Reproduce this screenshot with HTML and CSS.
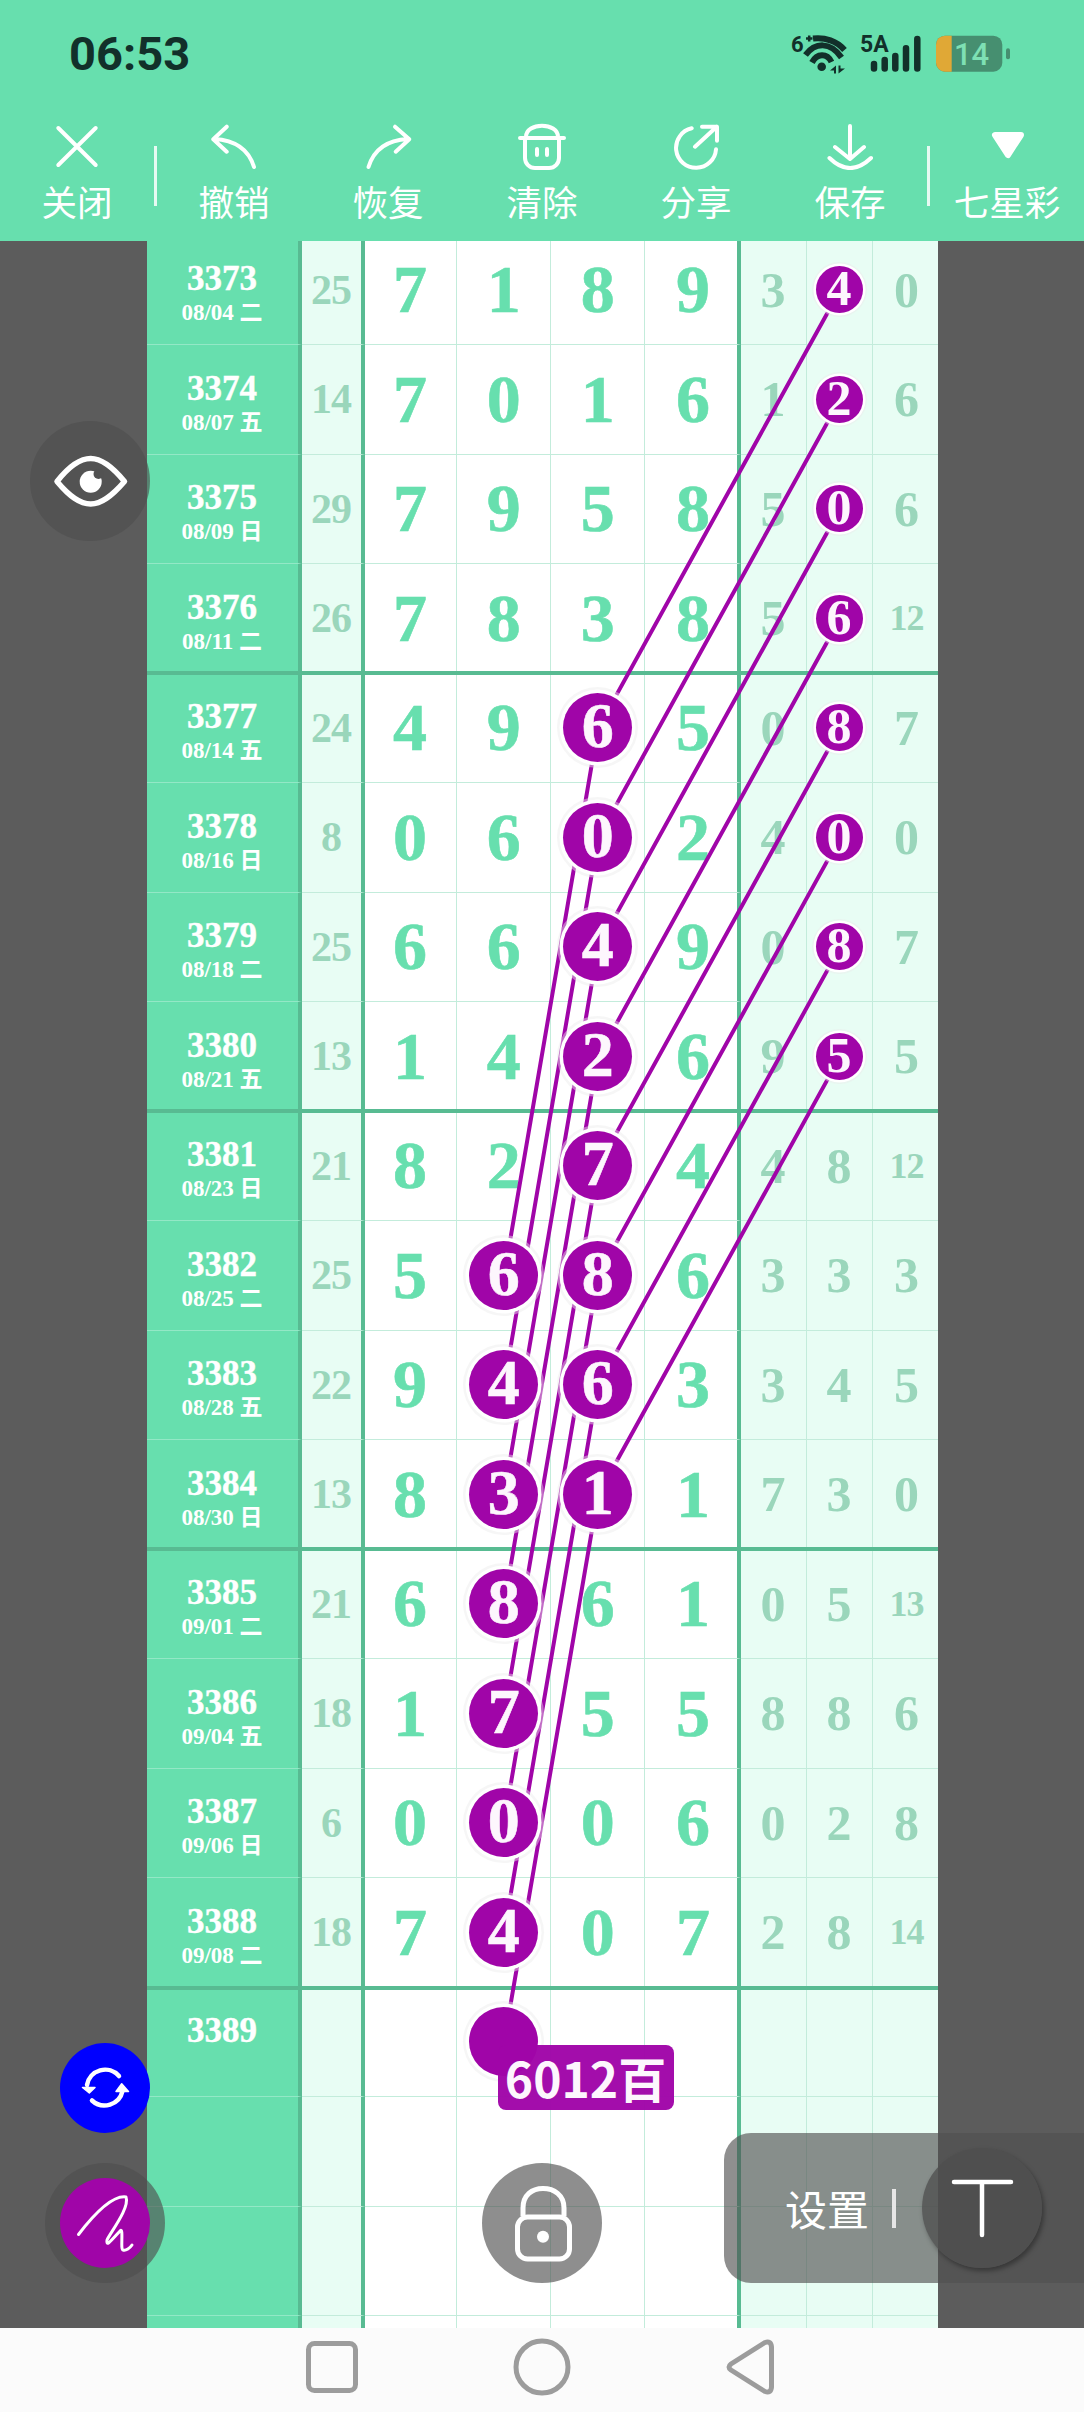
FILE: index.html
```html
<!DOCTYPE html>
<html lang="zh-CN">
<head>
    <meta charset="UTF-8">
    <meta name="viewport" content="width=device-width, initial-scale=1.0">
    <title>七星彩</title>
    <link rel="stylesheet" href="styles.css">
</head>
<body>
<div class="page">

    <header class="top">
        <div class="status">
            <span class="time">06:53</span>
            <svg class="status-icons" width="240" height="70" viewBox="0 0 240 70">
                <text class="st-small" x="11" y="32">6</text>
                <path class="st-plus" d="M26 18.500H32.500M29.200 15.500V21.500"/>
                <path class="st-wifi" d="M33 18.500C45 17 57 21 64.500 30M25.500 35C35 22.500 50 21 61.500 37.500M32 42.500C37 33 47 33 51.500 42"/>
                <circle class="st-fill" cx="41.700" cy="46.700" r="4.300"/>
                <path class="st-fill" d="M50 50.500L56 45.500V53.500H54V50.500ZM58.500 45.500H60.500V48.500H65L58.500 53.500Z"/>
                <text class="st-label" x="80" y="32">5A</text>
                <path class="st-bars" d="M94 44V48.400M104.700 40V48.400M115.300 36V48.400M126 28.300V48.400M137.300 19V48.400"/>
                <rect class="st-batt" x="156" y="15.700" width="66.300" height="36" rx="9"/>
                <path class="st-charge" d="M171.700 15.700H165a9 9 0 0 0-9 9V42.700a9 9 0 0 0 9 9H171.700Z"/>
                <rect class="st-batt" x="226" y="28.300" width="4" height="11" rx="2"/>
                <text class="st-level" x="174" y="45">14</text>
            </svg>
        </div>
        <nav class="tools">
            <div class="tool">
                <svg viewBox="0 0 60 48"><path d="M11.300 6L48.700 43M48.700 6L11.300 43"/></svg>
                <span>关闭</span>
            </div>
            <i class="tool-sep"></i>
            <div class="tool">
                <svg viewBox="0 0 60 48"><path d="M22.700 4.700L9.300 17.300L22.700 29.700M10 17C28 18 44 25 50 45"/></svg>
                <span>撤销</span>
            </div>
            <div class="tool">
                <svg viewBox="0 0 60 48"><path d="M37 4.700L51.300 17.300L37.700 29.700M10.500 45C16 27 30 18 50 17"/></svg>
                <span>恢复</span>
            </div>
            <div class="tool">
                <svg viewBox="0 0 60 48"><path d="M8 16H52M14 15C14 0 46 0 46 15M13 16V36a10 10 0 0 0 10 10H37a10 10 0 0 0 10-10V16M25 27V33M35 27V33"/></svg>
                <span>清除</span>
            </div>
            <div class="tool">
                <svg viewBox="0 0 60 48"><path d="M25.700 6.300A20 20 0 1 0 50 27.300M29 24.700L50.700 4.700M36 4.700H51V18.700"/></svg>
                <span>分享</span>
            </div>
            <div class="tool">
                <svg viewBox="0 0 60 48"><path d="M30 4V37M15 25L30 37L44 25M9.500 36Q30 56 51 36"/></svg>
                <span>保存</span>
            </div>
            <i class="tool-sep"></i>
            <div class="tool tool-last">
                <svg viewBox="0 0 60 48"><path class="solid" d="M18 13H44L31 33Z"/></svg>
                <span>七星彩</span>
            </div>
        </nav>
    </header>

    <main class="content">
        <div class="gutter"></div>
        <div class="board">
            <div class="rows">
                <div class="row"><div class="num"><b>3373</b><small>08/04 二</small></div><div class="sum">25</div><div class="mid">7</div><div class="mid">1</div><div class="mid">8</div><div class="mid">9</div><div class="side">3</div><div class="side"><span class="ball small">4</span></div><div class="side">0</div></div>
                <div class="row"><div class="num"><b>3374</b><small>08/07 五</small></div><div class="sum">14</div><div class="mid">7</div><div class="mid">0</div><div class="mid">1</div><div class="mid">6</div><div class="side">1</div><div class="side"><span class="ball small">2</span></div><div class="side">6</div></div>
                <div class="row"><div class="num"><b>3375</b><small>08/09 日</small></div><div class="sum">29</div><div class="mid">7</div><div class="mid">9</div><div class="mid">5</div><div class="mid">8</div><div class="side">5</div><div class="side"><span class="ball small">0</span></div><div class="side">6</div></div>
                <div class="row"><div class="num"><b>3376</b><small>08/11 二</small></div><div class="sum">26</div><div class="mid">7</div><div class="mid">8</div><div class="mid">3</div><div class="mid">8</div><div class="side">5</div><div class="side"><span class="ball small">6</span></div><div class="side wide">12</div></div>

                <div class="row"><div class="num"><b>3377</b><small>08/14 五</small></div><div class="sum">24</div><div class="mid">4</div><div class="mid">9</div><div class="mid"><span class="ball">6</span></div><div class="mid">5</div><div class="side">0</div><div class="side"><span class="ball small">8</span></div><div class="side">7</div></div>
                <div class="row"><div class="num"><b>3378</b><small>08/16 日</small></div><div class="sum">8</div><div class="mid">0</div><div class="mid">6</div><div class="mid"><span class="ball">0</span></div><div class="mid">2</div><div class="side">4</div><div class="side"><span class="ball small">0</span></div><div class="side">0</div></div>
                <div class="row"><div class="num"><b>3379</b><small>08/18 二</small></div><div class="sum">25</div><div class="mid">6</div><div class="mid">6</div><div class="mid"><span class="ball">4</span></div><div class="mid">9</div><div class="side">0</div><div class="side"><span class="ball small">8</span></div><div class="side">7</div></div>
                <div class="row"><div class="num"><b>3380</b><small>08/21 五</small></div><div class="sum">13</div><div class="mid">1</div><div class="mid">4</div><div class="mid"><span class="ball">2</span></div><div class="mid">6</div><div class="side">9</div><div class="side"><span class="ball small">5</span></div><div class="side">5</div></div>

                <div class="row"><div class="num"><b>3381</b><small>08/23 日</small></div><div class="sum">21</div><div class="mid">8</div><div class="mid">2</div><div class="mid"><span class="ball">7</span></div><div class="mid">4</div><div class="side">4</div><div class="side">8</div><div class="side wide">12</div></div>
                <div class="row"><div class="num"><b>3382</b><small>08/25 二</small></div><div class="sum">25</div><div class="mid">5</div><div class="mid"><span class="ball">6</span></div><div class="mid"><span class="ball">8</span></div><div class="mid">6</div><div class="side">3</div><div class="side">3</div><div class="side">3</div></div>
                <div class="row"><div class="num"><b>3383</b><small>08/28 五</small></div><div class="sum">22</div><div class="mid">9</div><div class="mid"><span class="ball">4</span></div><div class="mid"><span class="ball">6</span></div><div class="mid">3</div><div class="side">3</div><div class="side">4</div><div class="side">5</div></div>
                <div class="row"><div class="num"><b>3384</b><small>08/30 日</small></div><div class="sum">13</div><div class="mid">8</div><div class="mid"><span class="ball">3</span></div><div class="mid"><span class="ball">1</span></div><div class="mid">1</div><div class="side">7</div><div class="side">3</div><div class="side">0</div></div>

                <div class="row"><div class="num"><b>3385</b><small>09/01 二</small></div><div class="sum">21</div><div class="mid">6</div><div class="mid"><span class="ball">8</span></div><div class="mid">6</div><div class="mid">1</div><div class="side">0</div><div class="side">5</div><div class="side wide">13</div></div>
                <div class="row"><div class="num"><b>3386</b><small>09/04 五</small></div><div class="sum">18</div><div class="mid">1</div><div class="mid"><span class="ball">7</span></div><div class="mid">5</div><div class="mid">5</div><div class="side">8</div><div class="side">8</div><div class="side">6</div></div>
                <div class="row"><div class="num"><b>3387</b><small>09/06 日</small></div><div class="sum">6</div><div class="mid">0</div><div class="mid"><span class="ball">0</span></div><div class="mid">0</div><div class="mid">6</div><div class="side">0</div><div class="side">2</div><div class="side">8</div></div>
                <div class="row"><div class="num"><b>3388</b><small>09/08 二</small></div><div class="sum">18</div><div class="mid">7</div><div class="mid"><span class="ball">4</span></div><div class="mid">0</div><div class="mid">7</div><div class="side">2</div><div class="side">8</div><div class="side wide">14</div></div>

                <div class="row"><div class="num"><b>3389</b></div><div class="sum"></div><div class="mid"></div><div class="mid"><span class="ball"></span></div><div class="mid"></div><div class="mid"></div><div class="side"></div><div class="side"></div><div class="side"></div></div>
                <div class="row"><div class="num"></div><div class="sum"></div><div class="mid"></div><div class="mid"></div><div class="mid"></div><div class="mid"></div><div class="side"></div><div class="side"></div><div class="side"></div></div>
                <div class="row"><div class="num"></div><div class="sum"></div><div class="mid"></div><div class="mid"></div><div class="mid"></div><div class="mid"></div><div class="side"></div><div class="side"></div><div class="side"></div></div>
                <div class="row"><div class="num"></div><div class="sum"></div><div class="mid"></div><div class="mid"></div><div class="mid"></div><div class="mid"></div><div class="side"></div><div class="side"></div><div class="side"></div></div>
            </div>

            <svg class="links" width="791" height="2087" viewBox="0 0 791 2087">
                <line class="band" x1="0" x2="791" y1="432" y2="432"/>
                <line class="band" x1="0" x2="791" y1="870" y2="870"/>
                <line class="band" x1="0" x2="791" y1="1308" y2="1308"/>
                <line class="band" x1="0" x2="791" y1="1747" y2="1747"/>
                <polyline points="693,49.2 451,487.3 357,1035"/>
                <polyline points="693,158.7 451,596.9 357,1144.5"/>
                <polyline points="693,268.3 451,706.4 357,1254"/>
                <polyline points="693,377.8 451,815.9 357,1363.6"/>
                <polyline points="693,487.3 451,925.4 357,1473.1"/>
                <polyline points="693,596.9 451,1035 357,1582.6"/>
                <polyline points="693,706.4 451,1144.5 357,1692.2"/>
                <polyline points="693,815.9 451,1254 357,1801.7"/>
            </svg>
            <div class="tag">6012百</div>
        </div>
        <div class="gutter"></div>
    </main>

    <footer class="navbar">
        <svg width="52" height="52" viewBox="0 0 52 52"><rect x="2.500" y="2.500" width="47" height="47" rx="6"/></svg>
        <svg width="58" height="58" viewBox="0 0 58 58"><circle cx="29" cy="29" r="26"/></svg>
        <svg width="48" height="58" viewBox="0 0 48 58"><path d="M39 4.500Q45 2.500 45.500 9V49Q45 55.500 39 53.500L5 32Q1 29 5 26Z"/></svg>
    </footer>

    <div class="float eye">
        <svg width="120" height="120" viewBox="0 0 120 120">
            <path class="eye-line" d="M27 60.500C40 44 50 37.500 60.700 37.500C71 37.500 81 44 94.500 60.500C81 76 71 83 60.700 83C50 83 40 76 27 60.500Z"/>
            <circle class="eye-dot" cx="60.700" cy="60.700" r="11"/>
            <circle class="eye-bite" cx="68.500" cy="53" r="5"/>
        </svg>
    </div>

    <div class="btn-round refresh">
        <svg width="90" height="90" viewBox="0 0 90 90">
            <path class="ic-line" d="M59 33A18.400 18.400 0 0 0 27 42M32 57.500A18.400 18.400 0 0 0 62.500 48"/>
            <path class="ic-head" d="M29.300 50L22.500 44.500H35ZM61.700 40.700L56 48.500H68.500Z"/>
        </svg>
    </div>

    <div class="float pen">
        <div class="btn-round pen-inner">
            <svg width="90" height="90" viewBox="0 0 90 90">
                <path class="ic-thin" d="M18.500 56.500C32 39 52 17 66 19C70 30 50 55 47 62C46 69 50 64 60 53C64 48 60 72 63 72C66 73 70 70 72 67"/>
            </svg>
        </div>
    </div>

    <div class="float lock">
        <svg width="120" height="120" viewBox="0 0 120 120">
            <path class="ic-lock" d="M41 53V45C41 32 50 25.500 61 25.500C72 25.500 82 32 82 45V53"/>
            <rect class="ic-lock" x="35.500" y="54" width="52" height="42" rx="10"/>
            <circle class="eye-dot" cx="61" cy="73.700" r="6"/>
        </svg>
    </div>

    <div class="settings">
        <span class="settings-text">设置</span>
        <i class="settings-sep"></i>
        <div class="font-btn">
            <svg width="120" height="120" viewBox="0 0 120 120"><path class="ic-line" d="M32 34H89M60 34V87"/></svg>
        </div>
    </div>

</div>
</body>
</html>
```
FILE: styles.css
```css
* {
    box-sizing: border-box;
}
html, body {
    margin: 0;
    padding: 0;
}
body {
    font-family: "Noto Sans CJK SC", "Noto Sans", sans-serif;
}
.page {
    position: relative;
    width: 1084px;
    height: 2412px;
    overflow: hidden;
    display: flex;
    flex-direction: column;
    background-color: #5c5c5c;
}

/* header */
.top {
    flex: none;
    height: 241px;
    background-color: #67dfae;
}
.status {
    height: 110px;
    padding: 20px 64px 0 69px;
    display: flex;
    justify-content: space-between;
}
.time {
    font-family: Roboto, sans-serif;
    font-weight: 700;
    font-size: 47px;
    line-height: 68px;
    color: #12302a;
}
.st-small, .st-label {
    font-family: Roboto, sans-serif;
    font-weight: 700;
    fill: #12302a;
}
.st-small {
    font-size: 22px;
}
.st-label {
    font-size: 23px;
}
.st-plus {
    fill: none;
    stroke: #12302a;
    stroke-width: 2.500;
}
.st-wifi {
    fill: none;
    stroke: #12302a;
    stroke-width: 6;
}
.st-fill {
    fill: #12302a;
}
.st-bars {
    fill: none;
    stroke: #12302a;
    stroke-width: 6.500;
    stroke-linecap: round;
}
.st-batt {
    fill: #468f70;
}
.st-charge {
    fill: #e0a836;
}
.st-level {
    font-family: Roboto, sans-serif;
    font-weight: 500;
    font-size: 31px;
    fill: #7ee0b4;
}
.tools {
    display: flex;
    height: 131px;
    align-items: center;
}
.tool {
    flex: none;
    width: 154px;
    height: 131px;
    padding-top: 12px;
    display: flex;
    flex-direction: column;
    align-items: center;
    color: #fff;
}
.tool svg {
    width: 60px;
    height: 48px;
    fill: none;
    stroke: #fff;
    stroke-width: 4;
    stroke-linecap: round;
    stroke-linejoin: round;
}
.tool svg .solid {
    fill: #fff;
    stroke-width: 6;
}
.tool span {
    margin-top: 7px;
    font-size: 35.500px;
    line-height: 48px;
    white-space: nowrap;
}
.tool-last {
    flex: 1;
}
.tool-sep {
    flex: none;
    width: 3px;
    height: 60px;
    background-color: #e6faf2;
}

/* chart */
.content {
    flex: 1;
    display: flex;
    min-height: 0;
}
.gutter {
    flex: 1;
    background-color: #5c5c5c;
}
.board {
    position: relative;
    flex: none;
    width: 791px;
    overflow: hidden;
}
.rows {
    margin-top: -5.530px;
}
.row {
    display: grid;
    grid-template-columns: 155px 63px 92px 94px 94px 96px 66px 66px 65px;
    height: 109.530px;
    font-family: "Liberation Serif", "Noto Sans CJK SC", serif;
    font-weight: bold;
}
.row > div {
    border-bottom: 1.500px solid #c3ecdb;
}
.row > .num {
    background-color: #67dfae;
    color: #fff;
    border-right: 4.500px solid #58bb92;
    border-bottom-color: #93e8c6;
    padding-top: 25.500px;
    display: flex;
    flex-direction: column;
    align-items: center;
}
.num b {
    font-size: 35px;
    line-height: 36px;
    -webkit-text-stroke: 0.4px #fff;
}
.num small {
    font-size: 23px;
    line-height: 32px;
    white-space: nowrap;
}
.sum, .mid, .side {
    display: flex;
    align-items: center;
    justify-content: center;
}
.sum {
    background-color: #e8fdf4;
    border-right: 4.500px solid #58bb92;
    color: #9ad6bb;
    font-size: 42px;
    letter-spacing: -1px;
}
.mid {
    background-color: #fff;
    border-right: 1.500px solid #c3ecdb;
    padding-left: 1.500px;
    color: #67dfae;
    font-size: 68px;
    -webkit-text-stroke: 0.6px #67dfae;
}
.mid:nth-child(3) {
    padding-left: 0;
}
.mid:nth-child(6) {
    border-right: 4.500px solid #58bb92;
    padding-left: 5px;
}
.side {
    background-color: #e8fdf4;
    border-right: 1.500px solid #c3ecdb;
    color: #9ad6bb;
    font-size: 50px;
}
.side:last-child {
    border-right: 0;
    padding-left: 3px;
}
.side.wide {
    font-size: 36px;
    letter-spacing: -1px;
}
.ball {
    position: relative;
    z-index: 2;
    flex: none;
    width: 69px;
    height: 69px;
    border-radius: 50%;
    background-color: #a005a8;
    color: #fdf6fd;
    font-size: 64px;
    line-height: 66px;
    text-align: center;
    -webkit-text-stroke: 0.6px #fdf6fd;
    box-shadow: 0 0 0 3.500px #fff, 0 0 0 6px rgba(235, 235, 235, 0.45);
}
.ball.small {
    width: 47px;
    height: 47px;
    font-size: 50px;
    line-height: 45px;
    -webkit-text-stroke: 0;
    box-shadow: 0 0 0 2.500px #fff, 0 0 0 4px rgba(235, 235, 235, 0.45);
}
.links {
    position: absolute;
    top: 0;
    left: 0;
    z-index: 1;
}
.links polyline {
    fill: none;
    stroke: #a005a8;
    stroke-width: 4;
}
.links .band {
    stroke: #58bb92;
    stroke-width: 4;
}
.tag {
    position: absolute;
    left: 351px;
    top: 1804px;
    z-index: 3;
    width: 176px;
    height: 65px;
    border-radius: 8px;
    background-color: rgba(160, 5, 168, 0.97);
    color: #fdf6fd;
    font-family: "Noto Sans CJK SC", sans-serif;
    font-weight: 700;
    font-size: 48px;
    line-height: 65px;
    text-align: center;
    white-space: nowrap;
}

/* bottom nav */
.navbar {
    flex: none;
    height: 84px;
    padding: 0 0 6px 306px;
    display: flex;
    align-items: center;
    gap: 155px;
    background-color: #fbfbfb;
}
.navbar svg {
    flex: none;
    fill: none;
    stroke: #9c9c9c;
    stroke-width: 5;
}

/* floating buttons */
.float {
    position: absolute;
    z-index: 4;
    width: 120px;
    height: 120px;
    border-radius: 50%;
    background-color: rgba(78, 78, 78, 0.64);
}
.float svg, .btn-round svg, .font-btn svg {
    display: block;
}
.eye {
    left: 30px;
    top: 421px;
}
.eye-line {
    fill: none;
    stroke: #fff;
    stroke-width: 5.500;
    stroke-linejoin: round;
}
.eye-dot {
    fill: #fff;
}
.eye-bite {
    fill: #525252;
}
.btn-round {
    width: 90px;
    height: 90px;
    border-radius: 50%;
}
.refresh {
    position: absolute;
    z-index: 4;
    left: 60px;
    top: 2043px;
    background-color: #0000ff;
}
.ic-line {
    fill: none;
    stroke: #fff;
    stroke-width: 4.500;
    stroke-linecap: round;
}
.ic-head {
    fill: #fff;
    stroke: #fff;
    stroke-width: 1.500;
    stroke-linejoin: round;
}
.pen {
    left: 45px;
    top: 2163px;
    padding: 15px;
}
.pen-inner {
    background-color: #a005a8;
}
.ic-thin {
    fill: none;
    stroke: #fff;
    stroke-width: 3;
    stroke-linecap: round;
    stroke-linejoin: round;
}
.lock {
    left: 482px;
    top: 2163px;
}
.ic-lock {
    fill: none;
    stroke: #fff;
    stroke-width: 5;
}
.settings {
    position: absolute;
    z-index: 4;
    left: 724px;
    right: 0;
    top: 2133px;
    height: 150px;
    padding-left: 61px;
    display: flex;
    align-items: center;
    border-radius: 27px 0 0 27px;
    background-color: rgba(80, 80, 80, 0.64);
}
.settings-text {
    flex: none;
    width: 84px;
    font-size: 42px;
    line-height: 50px;
    color: #fff;
    white-space: nowrap;
}
.settings-sep {
    flex: none;
    width: 4px;
    height: 39px;
    margin: 0 26px 0 23px;
    background-color: #e6e6e6;
}
.font-btn {
    flex: none;
    width: 120px;
    height: 120px;
    border-radius: 50%;
    background-color: rgba(78, 78, 78, 0.77);
    box-shadow: 2px 3px 5px rgba(0, 0, 0, 0.35);
}
```
